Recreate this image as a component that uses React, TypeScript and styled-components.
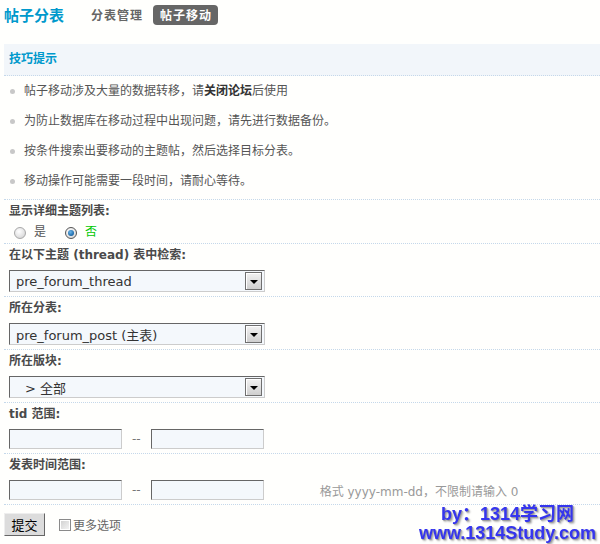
import React from "react";
import styled, { createGlobalStyle } from "styled-components";

const GlobalStyle = createGlobalStyle`
  html, body {
    margin: 0;
    padding: 0;
    background: #fffffd;
  }
  body {
    font-family: "DejaVu Sans", "Noto Sans CJK SC", sans-serif;
    font-size: 12px;
    color: #555;
  }
`;

const Page = styled.div`
  padding: 0 0 0 4px;
`;

const Header = styled.div`
  display: flex;
  align-items: center;
  height: 30px;
  margin-bottom: 14px;
`;

const Title = styled.h2`
  margin: 0 20px 0 0;
  font-family: "Noto Sans CJK SC", sans-serif;
  font-size: 15px;
  font-weight: bold;
  color: #0099cc;
  line-height: 20px;
`;

const NavLink = styled.span<{ $active?: boolean }>`
  height: 20px;
  line-height: 20px;
  padding: 0 6px 0 7px;
  margin-right: 4px;
  border-radius: 4px;
  font-family: "Noto Sans CJK SC", sans-serif;
  font-weight: bold;
  letter-spacing: 1px;
  color: ${(p) => (p.$active ? "#fff" : "#666")};
  background: ${(p) => (p.$active ? "#666" : "transparent")};
`;

const TipsHead = styled.div`
  height: 31px;
  line-height: 31px;
  padding-left: 5px;
  background: #f2f6fa;
  color: #0099cc;
  font-weight: bold;
  border-bottom: 1px dotted #c5d8ea;
`;

const TipList = styled.ul`
  list-style: none;
  margin: 0;
  padding: 0 0 3px;
  border-bottom: 1px dotted #c5d8ea;
`;

const TipItem = styled.li`
  position: relative;
  height: 30px;
  line-height: 30px;
  padding-left: 20px;
  color: #555;
  &::before {
    content: "";
    position: absolute;
    left: 6px;
    top: 13px;
    width: 5px;
    height: 5px;
    border-radius: 50%;
    background: #c8c8c8;
  }
  & > b {
    color: #333;
  }
`;

const Section = styled.div`
  border-bottom: 1px dotted #c5d8ea;
`;

const Label = styled.div`
  padding: 3px 5px;
  line-height: 16px;
  font-weight: bold;
  color: #4a4a4a;
`;

const FieldRow = styled.div<{ $pad?: string }>`
  display: flex;
  align-items: center;
  padding: ${(p) => p.$pad ?? "4px 5px 4px"};
`;

const RadioLabel = styled.label<{ $green?: boolean }>`
  display: flex;
  align-items: center;
  margin-left: 5px;
  margin-right: 14px;
  color: ${(p) => (p.$green ? "#00c800" : "#555")};
  font-size: 12px;
  line-height: 15px;
`;

const Radio = styled.span<{ $checked?: boolean }>`
  position: relative;
  box-sizing: border-box;
  width: 12px;
  height: 12px;
  margin-right: 8px;
  border-radius: 50%;
  border: 1px solid ${(p) => (p.$checked ? "#555" : "#a8a8a8")};
  background: radial-gradient(circle at 40% 35%, #ffffff 0%, #e2e2e2 60%, #c8c8c8 100%);
  &::after {
    content: "";
    display: ${(p) => (p.$checked ? "block" : "none")};
    position: absolute;
    left: 2px;
    top: 2px;
    width: 6px;
    height: 6px;
    border-radius: 50%;
    background: radial-gradient(circle at 40% 35%, #6ab4e8 0%, #1a68a8 70%, #0d4a80 100%);
  }
`;

const SelectBox = styled.div`
  box-sizing: border-box;
  position: relative;
  display: flex;
  align-items: center;
  width: 256px;
  height: 22px;
  padding-left: 6px;
  border: 1px solid;
  border-color: #666 #ccc #ccc #666;
  background: #f4f8fc;
  font-family: "DejaVu Sans", "Noto Sans CJK SC", sans-serif;
  font-size: 13px;
  color: #333;
`;

const Indent = styled.span`
  padding-left: 9px;
`;

const ArrowButton = styled.span`
  position: absolute;
  right: 2px;
  top: 1px;
  box-sizing: border-box;
  width: 17px;
  height: 18px;
  border: 1px solid #6f6f6f;
  box-shadow: inset 1px 1px 0 #fff;
  background: linear-gradient(#f2f2f2, #cfcfcf);
  display: flex;
  align-items: center;
  justify-content: center;
  &::after {
    content: "";
    width: 0;
    height: 0;
    border-left: 4px solid transparent;
    border-right: 4px solid transparent;
    border-top: 4px solid #000;
    margin-top: 1px;
  }
`;

const TextInput = styled.div`
  box-sizing: border-box;
  width: 113px;
  height: 20px;
  border: 1px solid;
  border-color: #666 #ccc #ccc #666;
  background: #f4f8fc;
`;

const Dash = styled.span`
  margin: 0 10px;
  color: #777;
  font-size: 12px;
`;

const Hint = styled.span`
  margin-left: 56px;
  color: #999;
`;

const Footer = styled.div`
  display: flex;
  align-items: center;
  padding-top: 8px;
`;

const SubmitButton = styled.button`
  box-sizing: border-box;
  width: 41px;
  height: 23px;
  padding: 0;
  border: 1px solid;
  border-color: #eee #666 #666 #eee;
  background: #dcdcdc;
  font-family: "Noto Sans CJK SC", sans-serif;
  font-size: 13px;
  color: #000;
`;

const CheckLabel = styled.label`
  display: flex;
  align-items: center;
  margin-left: 14px;
  color: #666;
`;

const CheckBox = styled.span`
  box-sizing: border-box;
  width: 12px;
  height: 12px;
  margin-right: 2px;
  border: 1px solid #8a8a8a;
  background: linear-gradient(135deg, #cfcfcf, #f6f6f6);
  box-shadow: inset 0 0 0 1px #fff;
`;

const Watermark = styled.div`
  position: fixed;
  right: 4px;
  bottom: 1px;
  text-align: center;
  font-family: "Liberation Sans", "Noto Sans CJK SC", sans-serif;
  font-weight: bold;
  font-size: 18px;
  line-height: 19px;
  color: #3535ee;
  text-shadow: 1px 1px 1px #999, 2px 2px 2px #bbb;
`;

const tips: React.ReactNode[] = [
  <>帖子移动涉及大量的数据转移，请<b>关闭论坛</b>后使用</>,
  "为防止数据库在移动过程中出现问题，请先进行数据备份。",
  "按条件搜索出要移动的主题帖，然后选择目标分表。",
  "移动操作可能需要一段时间，请耐心等待。",
];

const Select: React.FC<{ children: React.ReactNode }> = ({ children }) => (
  <SelectBox>
    {children}
    <ArrowButton />
  </SelectBox>
);

const App: React.FC = () => {
  return (
    <>
      <GlobalStyle />
      <Page>
        <Header>
          <Title>帖子分表</Title>
          <NavLink>分表管理</NavLink>
          <NavLink $active>帖子移动</NavLink>
        </Header>

        <TipsHead>技巧提示</TipsHead>
        <TipList>
          {tips.map((t, i) => (
            <TipItem key={i}>{t}</TipItem>
          ))}
        </TipList>

        <Section>
          <Label>显示详细主题列表:</Label>
          <FieldRow $pad="3px 5px 3px">
            <RadioLabel>
              <Radio />是
            </RadioLabel>
            <RadioLabel $green>
              <Radio $checked />否
            </RadioLabel>
          </FieldRow>
        </Section>

        <Section>
          <Label>在以下主题 (thread) 表中检索:</Label>
          <FieldRow>
            <Select>pre_forum_thread</Select>
          </FieldRow>
        </Section>

        <Section>
          <Label>所在分表:</Label>
          <FieldRow>
            <Select>pre_forum_post (主表)</Select>
          </FieldRow>
        </Section>

        <Section>
          <Label>所在版块:</Label>
          <FieldRow>
            <Select>
              <Indent>&gt; 全部</Indent>
            </Select>
          </FieldRow>
        </Section>

        <Section>
          <Label>tid 范围:</Label>
          <FieldRow>
            <TextInput />
            <Dash>--</Dash>
            <TextInput />
          </FieldRow>
        </Section>

        <Section>
          <Label>发表时间范围:</Label>
          <FieldRow>
            <TextInput />
            <Dash>--</Dash>
            <TextInput />
            <Hint>格式 yyyy-mm-dd，不限制请输入 0</Hint>
          </FieldRow>
        </Section>

        <Footer>
          <SubmitButton>提交</SubmitButton>
          <CheckLabel>
            <CheckBox />
            更多选项
          </CheckLabel>
        </Footer>
      </Page>
      <Watermark>
        <div>by：1314学习网</div>
        <div>www.1314Study.com</div>
      </Watermark>
    </>
  );
};

export default App;
